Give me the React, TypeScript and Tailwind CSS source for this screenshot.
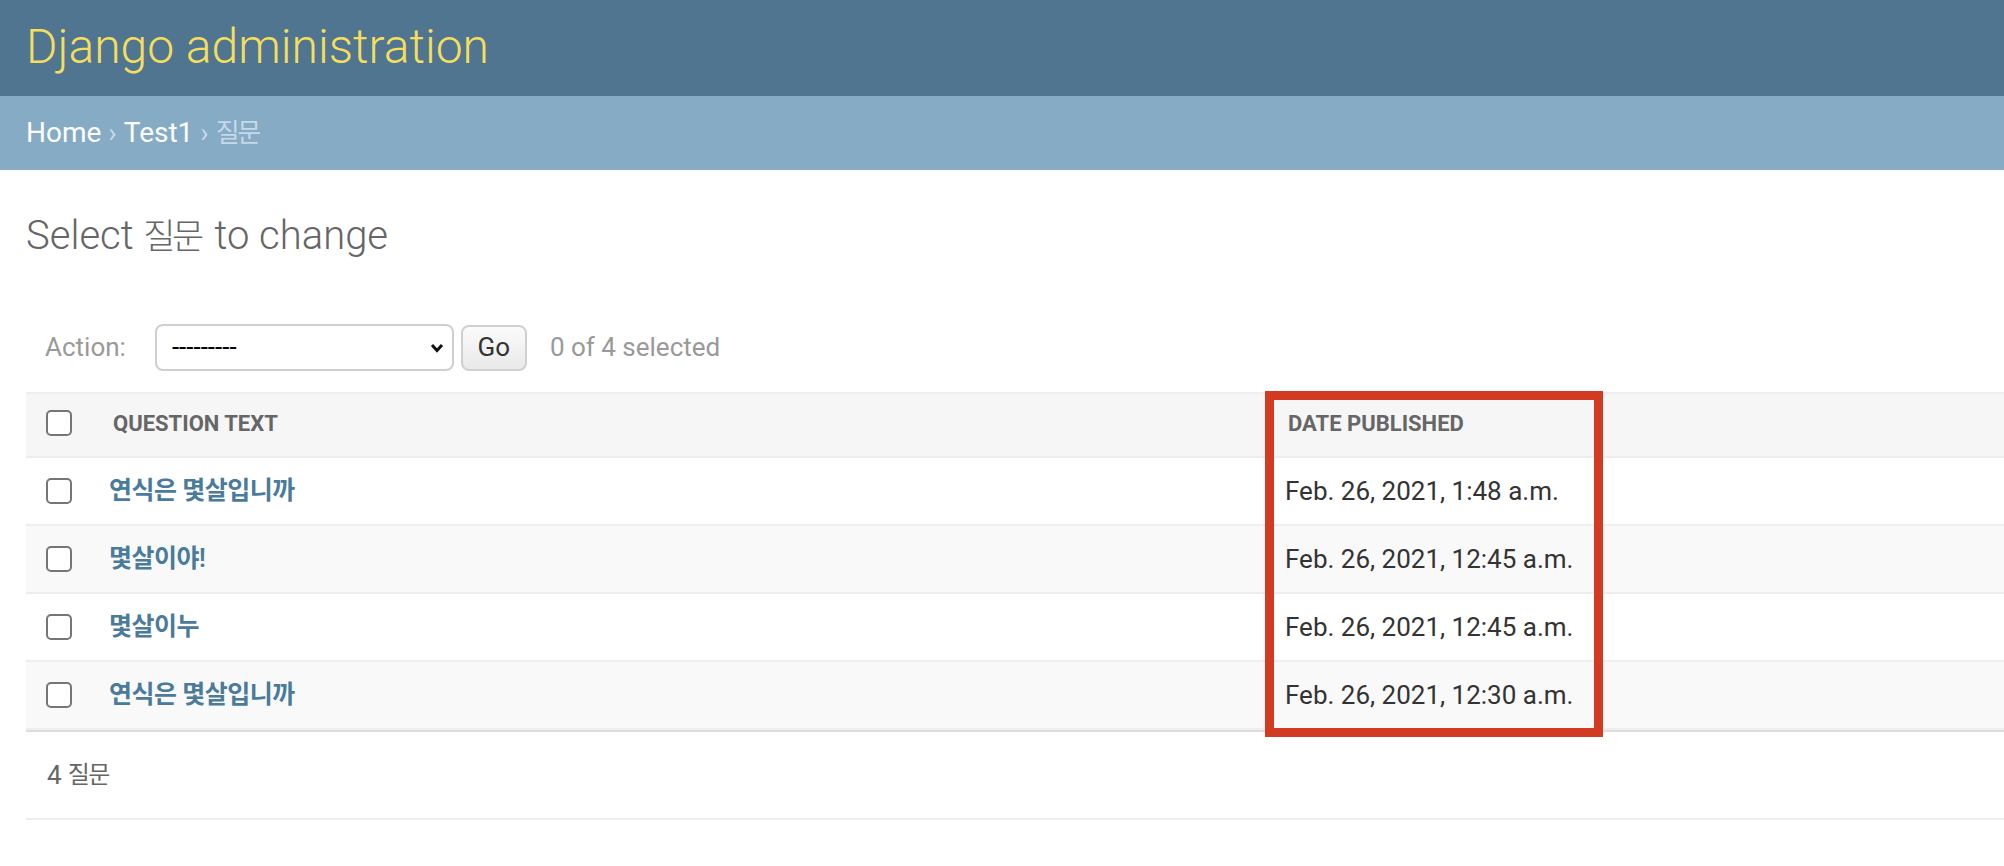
const rows = [
  { q: "연식은 몇살입니까", d: "Feb. 26, 2021, 1:48 a.m." },
  { q: "몇살이야!", d: "Feb. 26, 2021, 12:45 a.m." },
  { q: "몇살이누", d: "Feb. 26, 2021, 12:45 a.m." },
  { q: "연식은 몇살입니까", d: "Feb. 26, 2021, 12:30 a.m." },
];

function Checkbox() {
  return <div className="w-[26px] h-[26px] rounded-[5px] border-2 border-[#767676] bg-white" />;
}

export default function App() {
  return (
    <div className="min-h-screen bg-white font-['Roboto','Noto_Sans_CJK_KR',sans-serif]">
      {/* header */}
      <div className="h-[96px] bg-[#4f7590] pl-[26px] pb-[2px] flex items-center">
        <h1 className="text-[48px] leading-none font-light text-[#f5dd5d]">Django administration</h1>
      </div>

      {/* breadcrumbs */}
      <div className="h-[74px] bg-[#85abc5] pl-[26px] flex items-center text-[28px] text-[#c6d9e6]">
        <span className="text-white">Home</span>
        <span className="mx-[7px]">›</span>
        <span className="text-white">Test1</span>
        <span className="mx-[7px]">›</span>
        <span className="text-[26px] tracking-[-2.5px]">질문</span>
      </div>

      <div className="pl-[26px]">
        <h1 className="mt-[42px] text-[40px] leading-[48px] font-light text-[#666] whitespace-nowrap">
          Select <span className="text-[35px] tracking-[-3.5px] mr-[4px]">질문</span> to change
        </h1>

        {/* actions */}
        <div className="mt-[62px] h-[47px] flex items-center text-[26px]">
          <span className="ml-[19px] text-[#999]">Action:</span>
          <div className="ml-[29px] w-[299px] h-[47px] rounded-[8px] border-2 border-[#cfcfcf] bg-white flex items-center pl-[15px] pr-[8px] justify-between">
            <span className="text-black">---------</span>
            <svg width="14" height="10" viewBox="0 0 14 10">
              <path d="M2 2 L7 7.5 L12 2" fill="none" stroke="#111" strokeWidth="3" />
            </svg>
          </div>
          <div className="ml-[7px] w-[66px] h-[46px] rounded-[8px] border-2 border-[#d0d0d0] bg-gradient-to-b from-[#fbfbfb] to-[#e9e9e9] flex items-center justify-center text-[#333]">
            Go
          </div>
          <span className="ml-[23px] text-[#999]">0 of 4 selected</span>
        </div>

        {/* result list */}
        <div className="relative mt-[21px]">
          <div className="h-[66px] flex items-center pb-[4px] bg-[#f6f6f6] border-y-2 border-[#eee] text-[22px] font-bold text-[#666]">
            <div className="w-[70px] shrink-0 pl-[20px]">
              <Checkbox />
            </div>
            <div className="w-[1173px] shrink-0 pl-[17px]">QUESTION TEXT</div>
            <div className="w-[322px] shrink-0 pl-[19px] whitespace-nowrap">DATE PUBLISHED</div>
            <div className="flex-1" />
          </div>
          {rows.map((r, i) => (
            <div
              key={i}
              className={
                "h-[68px] flex items-center border-b-2 border-[#eee] " + (i % 2 === 1 ? "bg-[#f9f9f9]" : "bg-white")
              }
            >
              <div className="w-[70px] shrink-0 pl-[20px]">
                <Checkbox />
              </div>
              <div className="w-[1173px] shrink-0 pl-[13px] text-[25px] tracking-[-0.5px] font-semibold text-[#4a7b9a]">
                {r.q}
              </div>
              <div className="w-[322px] shrink-0 pl-[16px] text-[26px] text-[#333] whitespace-nowrap">{r.d}</div>
              <div className="flex-1" />
            </div>
          ))}
          <div className="h-[90px] flex items-center border-t-2 border-t-[#ddd] border-b-2 border-b-[#eee] pl-[21px] text-[26px] text-[#666]">
            4 <span className="ml-[6px] text-[24px] tracking-[-1.5px]">질문</span>
          </div>

          {/* annotation box */}
          <div className="absolute left-[1239px] top-[-1px] w-[338px] h-[346px] border-[9px] border-[#d23a22] pointer-events-none" />
        </div>
      </div>
    </div>
  );
}
